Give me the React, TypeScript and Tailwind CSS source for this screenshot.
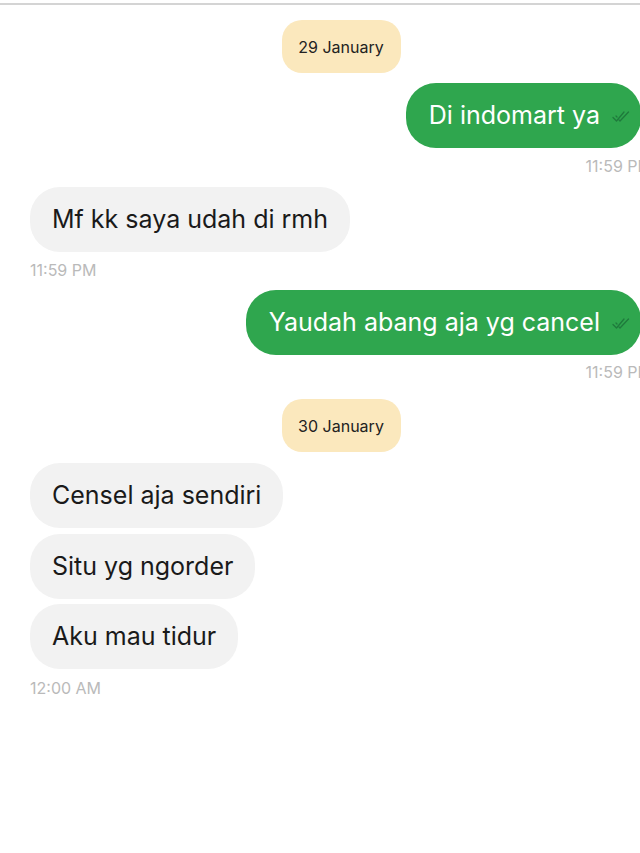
const font = { fontFamily: 'Inter, "Liberation Sans", Arial, sans-serif' }

function Checks() {
  return (
    <svg width="22" height="14" viewBox="0 0 22 14" fill="none" className="ml-[12px] shrink-0">
      <path d="M1 8.5l3.5 3.5L12 3" stroke="#1f7a3c" strokeWidth="1.3" strokeLinecap="round" strokeLinejoin="round" />
      <path d="M7 11l1 1 8.5-9" stroke="#1f7a3c" strokeWidth="1.3" strokeLinecap="round" strokeLinejoin="round" />
      <path d="M4 7l1 1" stroke="#1f7a3c" strokeWidth="1.3" strokeLinecap="round" />
    </svg>
  )
}

function DateBadge({ label, className }: { label: string; className?: string }) {
  return (
    <div className={`self-center flex h-[53px] w-[119px] items-center justify-center rounded-[20px] bg-[#fbe8bd] text-[16px] text-[#222] ${className}`}>
      {label}
    </div>
  )
}

function Sent({ text, className }: { text: string; className?: string }) {
  return (
    <div className={`mr-[11px] flex h-[65px] items-center self-end rounded-[30px] bg-[#2fa64e] pl-[23px] pr-[7px] text-[25px] text-white ${className}`}>
      <span>{text}</span>
      <Checks />
    </div>
  )
}

function Received({ text, className }: { text: string; className?: string }) {
  return (
    <div className={`flex h-[65px] items-center self-start rounded-[30px] bg-[#f2f2f2] px-[22px] text-[25px] text-[#1a1a1a] ${className}`}>
      {text}
    </div>
  )
}

function Time({ text, right, className }: { text: string; right?: boolean; className?: string }) {
  return (
    <div className={`text-[16px] leading-[18px] text-[#bababa] ${right ? 'self-end' : 'self-start'} ${className}`}>
      {text}
    </div>
  )
}

export default function App() {
  return (
    <div className="h-[853px] w-[640px] overflow-hidden bg-white" style={font}>
      <div className="mt-[3px] h-[2px] w-full bg-[#d4d4d4]" />
      <div className="flex w-[682px] flex-col px-[30px]">
        <DateBadge label="29 January" className="mt-[15px]" />
        <Sent text="Di indomart ya" className="mt-[10px]" />
        <Time text="11:59 PM" right className="mt-[9px]" />
        <Received text="Mf kk saya udah di rmh" className="mt-[12px]" />
        <Time text="11:59 PM" className="mt-[9px]" />
        <Sent text="Yaudah abang aja yg cancel" className="mt-[11px]" />
        <Time text="11:59 PM" right className="mt-[8px]" />
        <DateBadge label="30 January" className="mt-[18px]" />
        <Received text="Censel aja sendiri" className="mt-[11px]" />
        <Received text="Situ yg ngorder" className="mt-[6px]" />
        <Received text="Aku mau tidur" className="mt-[5px]" />
        <Time text="12:00 AM" className="mt-[10px]" />
      </div>
    </div>
  )
}
